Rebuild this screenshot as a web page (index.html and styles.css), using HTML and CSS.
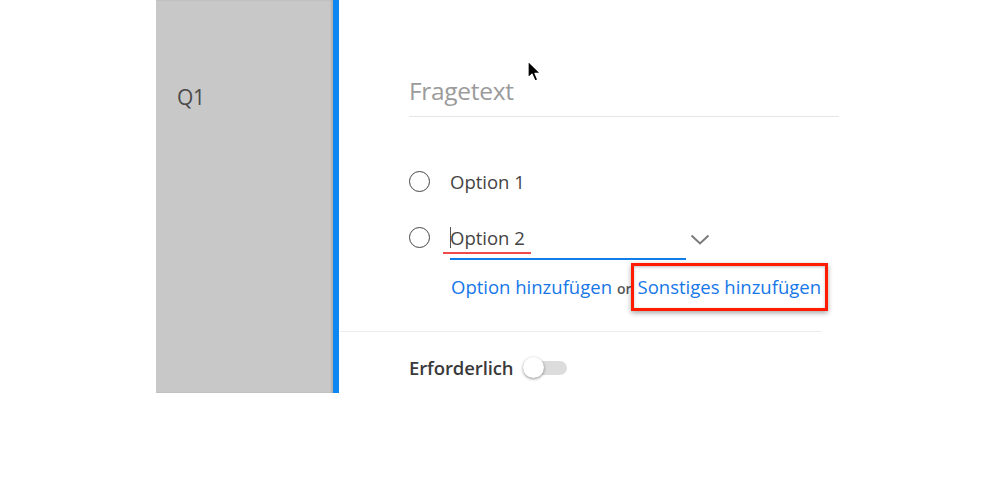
FILE: index.html
```
<!DOCTYPE html>
<html lang="de">
<head>
<meta charset="utf-8">
<link rel="stylesheet" href="styles.css">
</head>
<body>
<div class="page">
  <div class="side"><span class="qnum">Q1</span></div>
  <div class="bar"></div>
  <div class="main">
    <div class="question">Fragetext</div>
    <div class="options">
      <div class="opt">
        <span class="radio"></span>
        <span class="opt-label">Option 1</span>
      </div>
      <div class="opt">
        <span class="radio"></span>
        <span class="opt-edit">
          <span class="caret"></span><span class="spell">Option 2</span>
        </span>
        <svg class="chev" width="20" height="11" viewBox="0 0 20 11"><path d="M1.5 1.5 L10 9.5 L18.5 1.5" fill="none" stroke="#7a7a7a" stroke-width="2"/></svg>
      </div>
      <div class="links">
        <span class="link">Option hinzufügen</span>
        <span class="or">or</span>
        <span class="link highlight">Sonstiges hinzufügen</span>
      </div>
    </div>
    <div class="footer">
      <span class="req">Erforderlich</span>
      <span class="toggle"><span class="knob"></span></span>
    </div>
  </div>
</div>
<svg class="pointer" width="16" height="24" viewBox="0 0 16 24"><path d="M1 1 L1 18 L5 14.2 L8 21 L10.8 19.8 L8 13.3 L13.5 13.3 Z" fill="#000" stroke="#fff" stroke-width="1.3" stroke-linejoin="round"/></svg>
</body>
</html>
```
FILE: styles.css
```
html, body {
  margin: 0;
  padding: 0;
  background: #fff;
  font-family: "Open Sans", "Noto Sans", sans-serif;
}
.page {
  display: flex;
  height: 393px;
  padding-left: 156px;
  overflow: hidden;
}
.side {
  width: 177px;
  flex: none;
  background: #c8c8c8;
  box-shadow: inset -2px 0 2px rgba(0,0,0,0.12);
  padding: 83px 0 0 21px;
  box-sizing: border-box;
}
.qnum {
  font-size: 21px;
  color: #4a4a4a;
  letter-spacing: -0.3px;
}
.bar {
  width: 6px;
  flex: none;
  background: #0c86f0;
}
.main {
  width: 500px;
  display: flex;
  flex-direction: column;
}
.question {
  margin: 74px 0 0 70px;
  width: 430px;
  font-size: 24.5px;
  line-height: 34px;
  padding-bottom: 8px;
  color: #9b9b9b;
  border-bottom: 1px solid #e6e6e6;
  letter-spacing: -0.3px;
}
.options {
  margin: 36px 0 0 70px;
  display: flex;
  flex-direction: column;
}
.opt {
  display: flex;
  align-items: center;
  height: 56px;
  color: #444;
  font-size: 18.5px;
}
.radio {
  width: 19px;
  height: 19px;
  border: 1.6px solid #454545;
  border-radius: 50%;
  flex: none;
}
.opt-label {
  margin-left: 20px;
}
.opt-edit {
  margin-left: 20px;
  width: 236px;
  flex: none;
  position: relative;
  display: flex;
  align-items: center;
  height: 30px;
  margin-top: 8px;
  padding-bottom: 5px;
  border-bottom: 2px solid #0f7ee8;
}
.caret {
  position: absolute;
  left: 0;
  top: 4px;
  width: 1px;
  height: 21px;
  background: #555;
}
.spell {
  position: relative;
}
.spell::after {
  content: "";
  position: absolute;
  left: -7px;
  right: -6px;
  bottom: -4px;
  height: 2px;
  background: #f04a4a;
}
.chev {
  margin-left: 4px;
  margin-top: 4px;
}
.links {
  display: flex;
  align-items: baseline;
  margin: 7px 0 0 42px;
  font-size: 18.5px;
  line-height: 30px;
}
.link {
  color: #1677e8;
}
.or {
  font-size: 14px;
  font-weight: 600;
  color: #555;
  margin: 0 6px 0 5px;
}
.highlight {
  position: relative;
}
.highlight::after {
  content: "";
  position: absolute;
  left: -7px;
  right: -7px;
  top: -9px;
  bottom: -9px;
  border: 3px solid #ff1c00;
  box-shadow: 0 2px 5px rgba(0,0,0,0.35), inset 0 1px 3px rgba(0,0,0,0.25);
}
.footer {
  margin-top: 27px;
  width: 482px;
  box-sizing: border-box;
  margin-left: 1px;
  border-top: 1px solid #ececec;
  padding: 23px 0 0 69px;
  display: flex;
  align-items: center;
}
.req {
  font-size: 18.5px;
  font-weight: 600;
  color: #3a3a3a;
  letter-spacing: -0.1px;
}
.toggle {
  margin-left: 11px;
  width: 42px;
  height: 14px;
  border-radius: 7px;
  background: #dcdcdc;
  position: relative;
}
.knob {
  position: absolute;
  left: -2px;
  top: -4px;
  width: 21px;
  height: 21px;
  border-radius: 50%;
  background: #fff;
  box-shadow: 0 1px 3px rgba(0,0,0,0.45);
}
.pointer {
  position: absolute;
  left: 527px;
  top: 60px;
}
```
